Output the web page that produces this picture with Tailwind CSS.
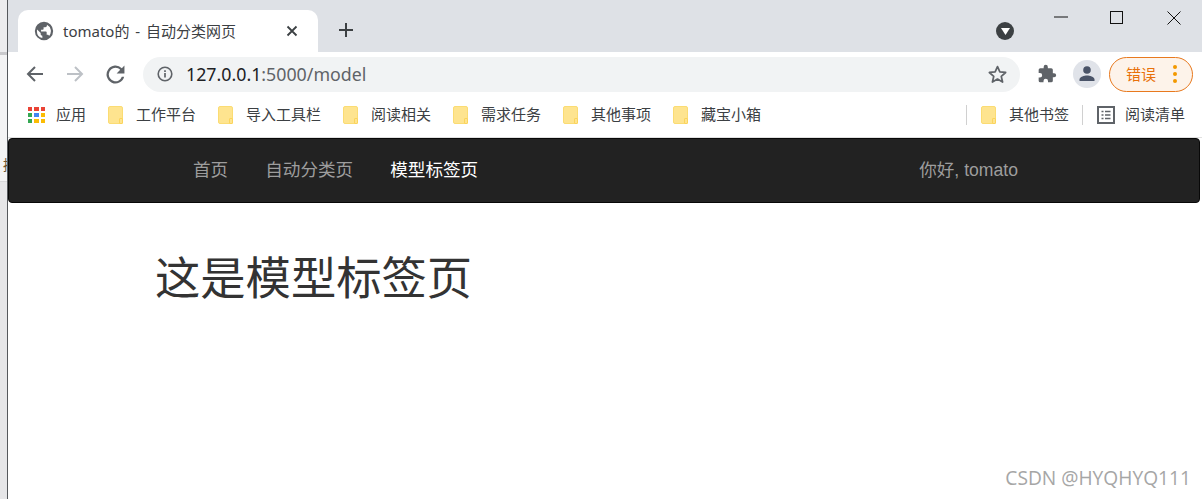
<!DOCTYPE html>
<html lang="zh-CN">
<head>
  <meta charset="UTF-8" />
  <title>tomato的 - 自动分类网页</title>
  <script src="https://cdn.jsdelivr.net/npm/@tailwindcss/browser@4"></script>
</head>
<body class="w-[1202px] h-[499px] overflow-hidden bg-white font-['Liberation_Sans','Noto_Sans_CJK_SC',sans-serif]">
  <div class="flex h-[499px]">
    <!-- window behind the browser -->
    <div class="w-[7px] shrink-0 bg-[#e6e6e8] flex flex-col overflow-hidden">
      <div class="h-[55px] border-b-[3px] border-[#c9c9cc] bg-[#ececee]"></div>
      <div class="h-[102px] bg-[#f3f3f4]"></div>
      <div class="h-[16px] pl-[3px] bg-[#f3f3f4] text-[14px] leading-[16px] text-[#6b5330] whitespace-nowrap">摘</div>
      <div class="h-[9px] bg-[#f3f3f4] border-b border-[#d8d8da]"></div>
    </div>
    <div class="w-px shrink-0 bg-[#55585c]"></div>

    <div class="flex-1 flex flex-col min-w-0">
      <!-- tab strip -->
      <div class="h-[52px] bg-[#dee1e6] flex relative">
        <div class="ml-[10px] mt-[10px] w-[300px] h-[42px] bg-white rounded-t-[10px] flex items-center pl-[16px] pr-[20px]">
          <svg class="w-[20px] h-[20px] shrink-0" viewBox="0 0 24 24"><path fill="#5f6368" d="M12 1a11 11 0 1 0 0 22 11 11 0 0 0 0-22zM3.500 12c0-.7.1-1.300.2-1.900L8 14.500v1.200c0 1.100.9 2 2 2v2.700A8.500 8.500 0 0 1 3.500 12zm14.600 5.900c-.3-.8-1-1.400-1.900-1.400h-1v-3c0-.6-.4-1-1-1H8.500v-2h2c.6 0 1-.4 1-1v-2h2c1.100 0 2-.9 2-2v-.9a8.500 8.500 0 0 1 2.600 13.300z"/></svg>
          <span class="ml-[9px] flex-1 font-['Noto_Sans','Noto_Sans_CJK_SC',sans-serif] text-[15px] [word-spacing:2px] text-[#3c4043] whitespace-nowrap">tomato的 - 自动分类网页</span>
          <svg class="w-[12px] h-[12px] shrink-0" viewBox="0 0 12 12"><path d="M1.500 1.500l9 9M10.500 1.500l-9 9" stroke="#3c4043" stroke-width="1.800"/></svg>
        </div>
        <svg class="ml-[20px] mt-[22px] w-[16px] h-[16px]" viewBox="0 0 16 16"><path d="M8 1v14M1 8h14" stroke="#3c4043" stroke-width="2"/></svg>
        <!-- profile dropdown + window buttons -->
        <div class="absolute left-[988px] top-[22px] w-[18px] h-[18px] rounded-full bg-[#3c4043] flex items-center justify-center">
          <svg class="w-[9px] h-[7px]" viewBox="0 0 9 7"><path d="M0 0h9L4.500 7z" fill="#fff"/></svg>
        </div>
        <svg class="absolute left-[1046px] top-[16px] w-[14px] h-[2px]" viewBox="0 0 14 2"><path d="M0 1h14" stroke="#111" stroke-width="1"/></svg>
        <div class="absolute left-[1102px] top-[11px] w-[13px] h-[13px] border border-[#111]"></div>
        <svg class="absolute left-[1159px] top-[11px] w-[14px] h-[14px]" viewBox="0 0 14 14"><path d="M.5.500l13 13M13.500.500l-13 13" stroke="#111" stroke-width="1"/></svg>
      </div>

      <!-- toolbar -->
      <div class="h-[44px] bg-white flex items-center relative">
        <svg class="ml-[17px] w-[20px] h-[20px]" viewBox="0 0 20 20"><path d="M18 10H3M10 3l-7 7 7 7" fill="none" stroke="#5f6368" stroke-width="2"/></svg>
        <svg class="ml-[20px] w-[20px] h-[20px]" viewBox="0 0 20 20"><path d="M2 10h15M10 3l7 7-7 7" fill="none" stroke="#bdc1c6" stroke-width="2"/></svg>
        <svg class="ml-[21px] w-[19px] h-[19px]" viewBox="3.500 3.500 17 17"><path fill="#5f6368" d="M17.650 6.350A8 8 0 1 0 19.740 14h-2.080A6 6 0 1 1 12 6c1.660 0 3.140.690 4.220 1.780L13 11h7V4z"/></svg>
        <div class="ml-[18px] w-[877px] h-[35px] bg-[#f1f3f4] rounded-full flex items-center pl-[14px] pr-[12px]">
          <svg class="w-[16px] h-[16px] shrink-0" viewBox="0 0 16 16"><circle cx="8" cy="8" r="6.800" fill="none" stroke="#5f6368" stroke-width="1.600"/><path d="M8 7v4.500M8 4.300v1.600" stroke="#5f6368" stroke-width="1.700"/></svg>
          <span class="ml-[13px] flex-1 font-['Noto_Sans',sans-serif] text-[17.800px] text-[#202124] whitespace-nowrap">127.0.0.1<span class="text-[#5f6368]">:5000/model</span></span>
          <svg class="w-[21px] h-[21px] shrink-0" viewBox="0 0 24 24"><path fill="none" stroke="#5f6368" stroke-width="2" stroke-linejoin="round" d="M12 3l2.700 6.100 6.600.600-5 4.400 1.500 6.500L12 17.200 6.200 20.600l1.500-6.500-5-4.400 6.600-.600z"/></svg>
        </div>
        <svg class="ml-[17px] w-[20px] h-[20px]" viewBox="0 0 24 24"><path fill="#5f6368" d="M20.500 11H19V7a2 2 0 0 0-2-2h-4V3.500a2.500 2.500 0 0 0-5 0V5H4a2 2 0 0 0-2 2v3.800h1.500a2.700 2.700 0 0 1 0 5.400H2V20a2 2 0 0 0 2 2h3.800v-1.500a2.700 2.700 0 0 1 5.400 0V22H17a2 2 0 0 0 2-2v-4h1.500a2.500 2.500 0 0 0 0-5z"/></svg>
        <div class="ml-[16px] w-[28px] h-[28px] rounded-full bg-[#e0e3e9] flex items-center justify-center">
          <svg class="w-[20px] h-[20px]" viewBox="0 0 20 20"><circle cx="10" cy="6" r="3.800" fill="#4a5468"/><path d="M2.500 17v-1.500c0-2.800 5-4 7.500-4s7.500 1.200 7.500 4V17z" fill="#4a5468"/></svg>
        </div>
        <div class="ml-[8px] w-[84px] h-[35px] rounded-full border border-[#e8791e] bg-[#fdf3ea] flex items-center pl-[16px]">
          <span class="text-[15px] text-[#e8710a] font-['Noto_Sans_CJK_SC',sans-serif]">错误</span>
          <span class="ml-[17px] flex flex-col gap-[3px]">
            <span class="w-[4px] h-[4px] rounded-full bg-[#f29900]"></span>
            <span class="w-[4px] h-[4px] rounded-full bg-[#f29900]"></span>
            <span class="w-[4px] h-[4px] rounded-full bg-[#f29900]"></span>
          </span>
        </div>
      </div>

      <!-- bookmarks -->
      <div class="h-[42px] pb-[4px] bg-white flex items-center text-[15px] text-[#3c4043] font-['Noto_Sans_CJK_SC',sans-serif] whitespace-nowrap border-b border-[#e0e0e0]">
        <div class="ml-[20px] w-[17px] grid grid-cols-3 gap-[2px]">
          <span class="h-[4px] bg-[#ea4335]"></span><span class="h-[4px] bg-[#ea4335]"></span><span class="h-[4px] bg-[#ea4335]"></span>
          <span class="h-[4px] bg-[#34a853]"></span><span class="h-[4px] bg-[#4285f4]"></span><span class="h-[4px] bg-[#fbbc04]"></span>
          <span class="h-[4px] bg-[#34a853]"></span><span class="h-[4px] bg-[#fbbc04]"></span><span class="h-[4px] bg-[#fbbc04]"></span>
        </div>
        <span class="ml-[11px] w-[52px]">应用</span>
        <span class="relative w-[15px] h-[18px] rounded-[2px] bg-[#fee48f] border border-[#fbdc73]"><span class="absolute right-[-1px] bottom-[-1px] w-[4px] h-[6px] rounded-[1px] bg-[#fee48f] border border-[#fbd45c]"></span></span>
        <span class="ml-[13px] w-[82px]">工作平台</span>
        <span class="relative w-[15px] h-[18px] rounded-[2px] bg-[#fee48f] border border-[#fbdc73]"><span class="absolute right-[-1px] bottom-[-1px] w-[4px] h-[6px] rounded-[1px] bg-[#fee48f] border border-[#fbd45c]"></span></span>
        <span class="ml-[13px] w-[97px]">导入工具栏</span>
        <span class="relative w-[15px] h-[18px] rounded-[2px] bg-[#fee48f] border border-[#fbdc73]"><span class="absolute right-[-1px] bottom-[-1px] w-[4px] h-[6px] rounded-[1px] bg-[#fee48f] border border-[#fbd45c]"></span></span>
        <span class="ml-[13px] w-[82px]">阅读相关</span>
        <span class="relative w-[15px] h-[18px] rounded-[2px] bg-[#fee48f] border border-[#fbdc73]"><span class="absolute right-[-1px] bottom-[-1px] w-[4px] h-[6px] rounded-[1px] bg-[#fee48f] border border-[#fbd45c]"></span></span>
        <span class="ml-[13px] w-[82px]">需求任务</span>
        <span class="relative w-[15px] h-[18px] rounded-[2px] bg-[#fee48f] border border-[#fbdc73]"><span class="absolute right-[-1px] bottom-[-1px] w-[4px] h-[6px] rounded-[1px] bg-[#fee48f] border border-[#fbd45c]"></span></span>
        <span class="ml-[13px] w-[82px]">其他事项</span>
        <span class="relative w-[15px] h-[18px] rounded-[2px] bg-[#fee48f] border border-[#fbdc73]"><span class="absolute right-[-1px] bottom-[-1px] w-[4px] h-[6px] rounded-[1px] bg-[#fee48f] border border-[#fbd45c]"></span></span>
        <span class="ml-[13px]">藏宝小箱</span>
        <span class="ml-auto w-px h-[20px] bg-[#d0d0d0]"></span>
        <span class="relative ml-[14px] w-[15px] h-[18px] rounded-[2px] bg-[#fee48f] border border-[#fbdc73]"><span class="absolute right-[-1px] bottom-[-1px] w-[4px] h-[6px] rounded-[1px] bg-[#fee48f] border border-[#fbd45c]"></span></span>
        <span class="ml-[13px]">其他书签</span>
        <span class="ml-[13px] w-px h-[20px] bg-[#d0d0d0]"></span>
        <svg class="ml-[14px] w-[18px] h-[18px]" viewBox="0 0 18 18"><rect x="1" y="1" width="16" height="16" fill="none" stroke="#5f6368" stroke-width="2"/><path d="M4.500 5.500h2M8 5.500h5.500M4.500 9h2M8 9h5.500M4.500 12.500h2M8 12.500h5.500" stroke="#5f6368" stroke-width="1.400"/></svg>
        <span class="ml-[10px] mr-[17px]">阅读清单</span>
      </div>

      <!-- site navbar -->
      <nav class="h-[65px] mr-[2px] bg-[#222222] border border-[#080808] rounded-[4px] flex items-center pl-[184px] text-[17.600px] font-['Liberation_Sans','Noto_Sans_CJK_SC',sans-serif] text-[#9d9d9d]">
        <a>首页</a>
        <a class="ml-[37px]">自动分类页</a>
        <a class="ml-[37px] text-white">模型标签页</a>
        <span class="ml-[441px]">你好, tomato</span>
      </nav>

      <!-- page content -->
      <main class="flex-1 relative pl-[147px] pt-[52px]">
        <h1 class="text-[45.300px] leading-[50px] font-normal text-[#333333] font-['Liberation_Sans','Noto_Sans_CJK_SC',sans-serif]">这是模型标签页</h1>
        <span class="absolute right-[11px] bottom-[9px] font-['Open_Sans',sans-serif] text-[19.200px] leading-[24px] text-[#a6a6a6]">CSDN @HYQHYQ111</span>
      </main>
    </div>
  </div>
</body>
</html>
